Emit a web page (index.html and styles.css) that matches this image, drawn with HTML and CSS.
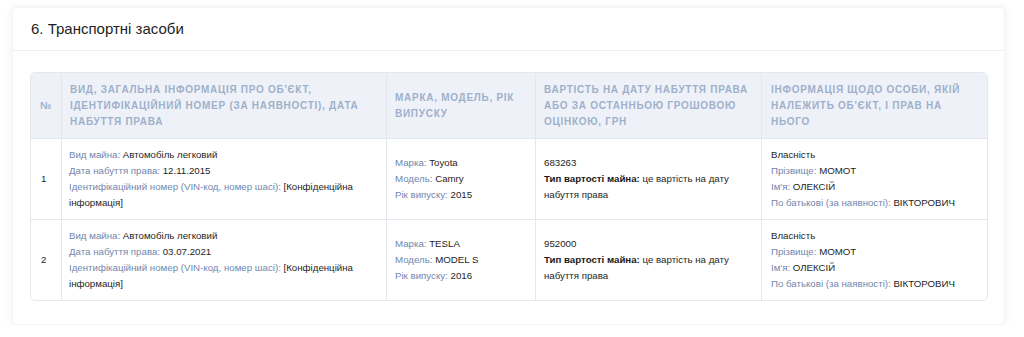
FILE: index.html
```html
<!DOCTYPE html>
<html lang="uk">
<head>
<meta charset="utf-8">
<link rel="stylesheet" href="styles.css">
</head>
<body>
<section class="card">
  <header class="card-head">6. Транспортні засоби</header>
  <div class="card-body">
    <table class="grid">
      <colgroup>
        <col class="c-num"><col class="c-info"><col class="c-model"><col class="c-cost"><col class="c-owner">
      </colgroup>
      <thead>
        <tr>
          <th class="num">№</th>
          <th>Вид, загальна інформація про об'єкт, ідентифікаційний номер (за наявності), дата набуття права</th>
          <th>Марка, модель, рік випуску</th>
          <th>Вартість на дату набуття права або за останньою грошовою оцінкою, грн</th>
          <th class="owner">Інформація щодо особи, якій належить об'єкт, і прав на нього</th>
        </tr>
      </thead>
      <tbody>
        <tr>
          <td class="num">1</td>
          <td class="info"><span class="lbl">Вид майна:</span> Автомобіль легковий<br><span class="lbl">Дата набуття права:</span> 12.11.2015<br><span class="lbl">Ідентифікаційний номер (VIN-код, номер шасі):</span> [Конфіденційна інформація]</td>
          <td><span class="lbl">Марка:</span> Toyota<br><span class="lbl">Модель:</span> Camry<br><span class="lbl">Рік випуску:</span> 2015</td>
          <td>683263<br><b>Тип вартості майна:</b> це вартість на дату набуття права</td>
          <td class="owner">Власність<br><span class="lbl">Прізвище:</span> МОМОТ<br><span class="lbl">Ім'я:</span> ОЛЕКСІЙ<br><span class="lbl">По батькові (за наявності):</span> ВІКТОРОВИЧ</td>
        </tr>
        <tr>
          <td class="num">2</td>
          <td class="info"><span class="lbl">Вид майна:</span> Автомобіль легковий<br><span class="lbl">Дата набуття права:</span> 03.07.2021<br><span class="lbl">Ідентифікаційний номер (VIN-код, номер шасі):</span> [Конфіденційна інформація]</td>
          <td><span class="lbl">Марка:</span> TESLA<br><span class="lbl">Модель:</span> MODEL S<br><span class="lbl">Рік випуску:</span> 2016</td>
          <td>952000<br><b>Тип вартості майна:</b> це вартість на дату набуття права</td>
          <td class="owner">Власність<br><span class="lbl">Прізвище:</span> МОМОТ<br><span class="lbl">Ім'я:</span> ОЛЕКСІЙ<br><span class="lbl">По батькові (за наявності):</span> ВІКТОРОВИЧ</td>
        </tr>
      </tbody>
    </table>
  </div>
</section>
</body>
</html>
```

FILE: styles.css
```css
html, body {
  margin: 0;
  padding: 0;
  background: #ffffff;
}
body {
  padding: 7px 19px 0 12px;
  font-family: "Liberation Sans", Arial, sans-serif;
  color: #222;
}
.card {
  width: 993px;
  background: #fff;
  border-radius: 4px;
  box-shadow: 0 0 8px rgba(30, 40, 70, 0.07);
  border: 1px solid #f3f4f7;
  box-sizing: border-box;
}
.card-head {
  height: 43px;
  box-sizing: border-box;
  padding: 11px 18px 0 18px;
  font-size: 15px;
  line-height: 20px;
  color: #1e1e1e;
  border-bottom: 1px solid #eceef2;
}
.card-body {
  padding: 21px 16px 23px 17px;
}
.grid {
  width: 958px;
  border-collapse: separate;
  border-spacing: 0;
  border: 1px solid #e3e8ef;
  border-radius: 5px;
  table-layout: fixed;
  font-size: 9.7px;
  line-height: 16px;
}
.c-num { width: 30px; }
.c-info { width: 325px; }
.c-model { width: 149px; }
.c-cost { width: 226px; }
.c-owner { width: 226px; }
.grid th {
  background: #eef2f8;
  color: #9fb0cb;
  font-weight: bold;
  font-size: 10px;
  letter-spacing: 0.72px;
  text-transform: uppercase;
  text-align: left;
  vertical-align: middle;
  padding: 9px 8px 8px 8px;
  line-height: 16px;
  border-left: 1px solid #e3e8ef;
}
.grid th:first-child { border-left: none; border-top-left-radius: 4px; }
.grid th:last-child { border-top-right-radius: 4px; }
.grid td {
  padding: 8px 8px 8px 8px;
  vertical-align: middle;
  border-top: 1px solid #e3e8ef;
  border-left: 1px solid #e3e8ef;
  color: #1e1e1e;
}
.grid td.info { padding-left: 7px; }
.grid .owner { padding-left: 9px; }
.grid td:first-child { border-left: none; }
.grid .num {
  text-align: left;
  padding-left: 10px;
  padding-right: 2px;
}
.grid th.num { letter-spacing: 0; padding-left: 9px; }
.lbl {
  color: #7286ae;
}
.grid b {
  font-weight: bold;
  color: #1a1a1a;
}
```
